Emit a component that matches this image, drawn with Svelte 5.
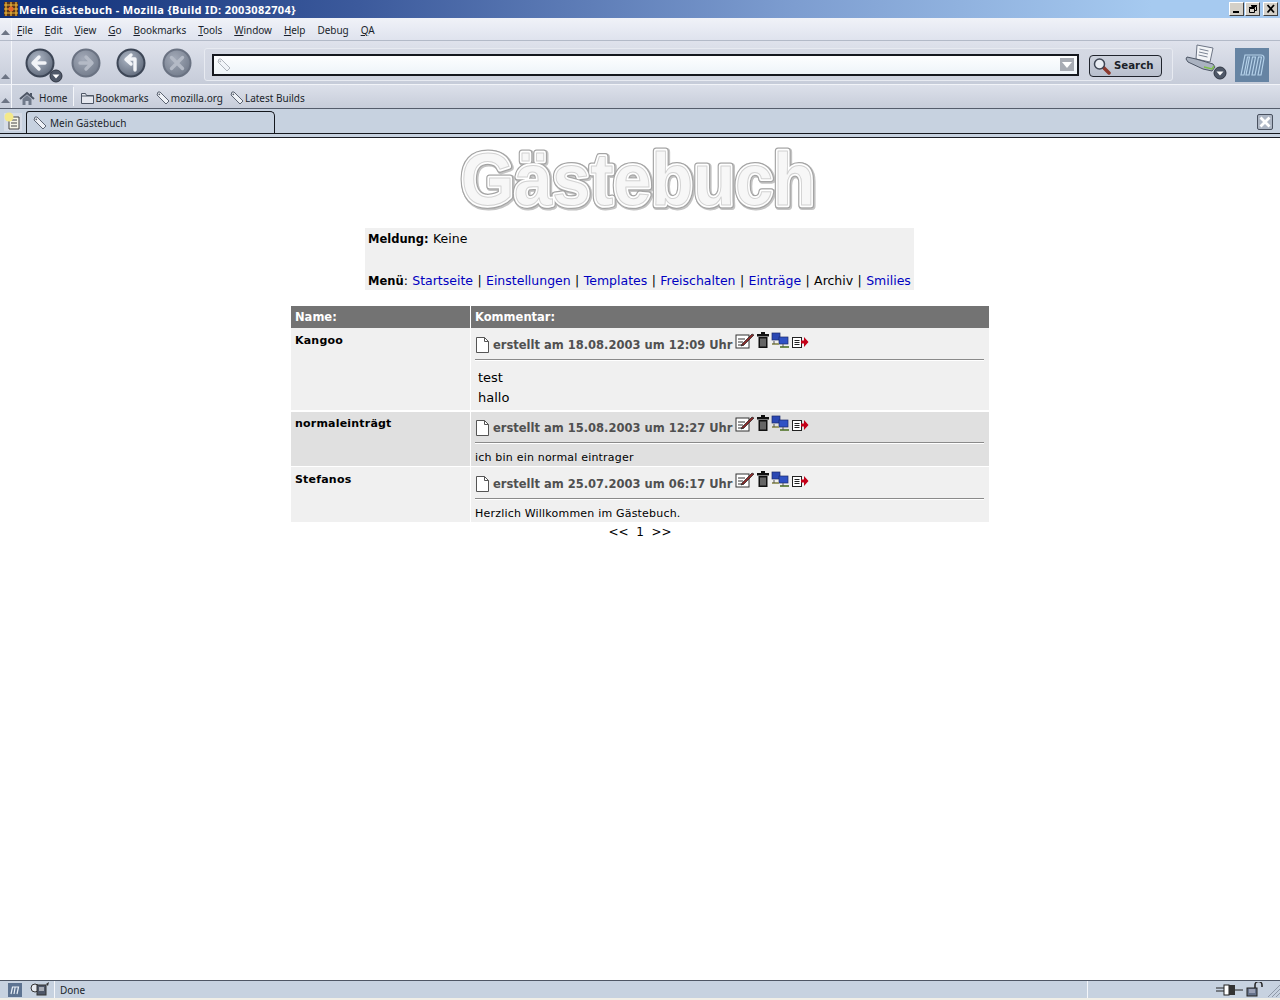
<script>
  const menus = [['F','ile'],['E','dit'],['V','iew'],['G','o'],['B','ookmarks'],['T','ools'],['W','indow'],['H','elp'],['','Debug'],['Q','A']];
  const links = ['Startseite','Einstellungen','Templates','Freischalten','Einträge'];
  const entries = [
    { name:'Kangoo', date:'18.08.2003 um 12:09', lines:['test','hallo'], big:true, alt:false },
    { name:'normaleinträgt', date:'15.08.2003 um 12:27', lines:['ich bin ein normal eintrager'], big:false, alt:true },
    { name:'Stefanos', date:'25.07.2003 um 06:17', lines:['Herzlich Willkommen im Gästebuch.'], big:false, alt:false }
  ];
</script>

{#snippet grip()}
  <span class="grip"><svg width="9" height="5" viewBox="0 0 9 5"><path d="M0 5 4.5 0 9 5z" fill="#6d7585"/></svg></span>
{/snippet}

{#snippet tag(cls)}
  <svg class={cls} width="16" height="16" viewBox="0 0 16 16"><path d="M3 2 2 5l9 9 3-3-9-9z" fill="#eef1f6" stroke="#5c6472" stroke-width="1"/><circle cx="4.3" cy="4.3" r=".9" fill="#5c6472"/></svg>
{/snippet}

{#snippet round(x, glyph, faded)}
  <svg class="round" width="32" height="32" viewBox="0 0 32 32" style="left:{x}px">
    <defs><radialGradient id="g{x}" cx=".4" cy=".35" r=".75"><stop offset="0" stop-color={faded ? '#a3aab8' : '#aeb7c6'}/><stop offset="1" stop-color={faded ? '#6f7888' : '#596374'}/></radialGradient></defs>
    <circle cx="16" cy="16" r="13.5" fill="url(#g{x})" stroke={faded ? '#6a7282' : '#3d4656'} stroke-width="2"/>
    <path d={glyph} fill="none" stroke={faded ? '#b4bac6' : '#f2f4f8'} stroke-width="3.4" stroke-linecap="round" stroke-linejoin="round"/>
  </svg>
{/snippet}

{#snippet dropdown(x, y)}
  <svg class="round" width="14" height="14" viewBox="0 0 14 14" style="left:{x}px;top:{y}px"><circle cx="7" cy="7" r="6" fill="#4f5868" stroke="#2f3643"/><path d="M3.5 5.5h7L7 9.5z" fill="#fff"/></svg>
{/snippet}

<div class="window">
  <header class="title">
    <svg width="16" height="16" viewBox="0 0 16 16" class="ticon"><rect x="1" y="1" width="14" height="14" fill="#5a3419"/><path d="M3 1v14M8 1v14M13 1v14M1 4h14M1 8h14M1 12h14" stroke="#f0b93a" stroke-width="1.2"/><circle cx="8" cy="8" r="2.500" fill="#e8692a"/></svg>
    <span class="ttext">Mein Gästebuch - Mozilla {'{'}Build ID: 2003082704{'}'}</span>
    <div class="winbtns">
      <button aria-label="min"><svg width="12" height="10"><rect x="2" y="7" width="6" height="2" fill="#000"/></svg></button>
      <button aria-label="max"><svg width="12" height="10"><path d="M4.5 2.5h5v4h-2M4 1.5h6M2.5 4.5h5v4h-5zM2 3.5h6" fill="none" stroke="#000"/></svg></button>
      <button class="close" aria-label="close"><svg width="12" height="10"><path d="M2.5 1 9 8.5M9 1 2.500 8.500" stroke="#000" stroke-width="1.800"/></svg></button>
    </div>
  </header>

  <div class="menubar">
    {@render grip()}
    <nav class="menus">
      {#each menus as m}<span><u>{m[0]}</u>{m[1]}</span>{/each}
    </nav>
  </div>

  <div class="navbar">
    {@render grip()}
    <div class="navbtns">
      {@render round(12, 'M21 16H10M15 10l-6 6 6 6', false)}
      {@render dropdown(37, 28)}
      {@render round(58, 'M10 16h11M16 10l6 6-6 6', true)}
      {@render round(103, 'M20 23V12H12M16 8l-5 4.500 5 4.500', false)}
      {@render round(149, 'M10.500 10.500l11 11M21.500 10.500l-11 11', true)}
    </div>
    <div class="urlbox">
      <div class="urlinput">
        {@render tag('urltag')}
        <span class="urlarrow"><svg width="10" height="6" viewBox="0 0 10 6"><path d="M0 0h10L5 6z" fill="#fff"/></svg></span>
      </div>
      <button class="search">
        <svg width="20" height="18" viewBox="0 0 20 18"><path d="M11 10l6 6" stroke="#8c3a2e" stroke-width="3.500" stroke-linecap="round"/><circle cx="7.500" cy="7" r="5" fill="#e9edf3" stroke="#3e4654" stroke-width="1.500"/></svg>
        Search
      </button>
    </div>
    <div class="printer">
      <svg width="42" height="38" viewBox="0 0 42 38">
        <path d="M12 1l16 3-3 14-14-3z" fill="#f3f5f8" stroke="#6d7585"/>
        <path d="M14.500 5l9 2M14 8l9 2M13.500 11l9 2" stroke="#7b8494"/>
        <path d="M2 13l9 2 17 5 2 3-3 4-9-2-15-7-2-3z" fill="#aab2c0" stroke="#4c5564"/>
        <path d="M19 23l8 2 2-3" stroke="#7cc049" stroke-width="1.500" fill="none"/>
      </svg>
      {@render dropdown(30, 25)}
    </div>
    <div class="mlogo">
      <svg width="34" height="34" viewBox="0 0 34 34"><rect width="34" height="34" fill="#6684a3"/><path d="M6 27 10 7h16q3 0 3 3l-3 17h-3l3.500-18h-3L20 27h-3l3.500-18h-3L14 27h-3l3.500-18h-2L9 27z" fill="none" stroke="#b5d2ea" stroke-width="1.200"/></svg>
    </div>
  </div>

  <div class="personal">
    {@render grip()}
    <div class="homeitem">
      <svg width="16" height="15" viewBox="0 0 16 15"><path d="M1 8 8 2l7 6" fill="none" stroke="#4d5665" stroke-width="2"/><path d="M3.500 8v6h3v-4h3v4h3V8L8 4z" fill="#707a8a"/><rect x="11" y="2" width="2" height="3" fill="#4d5665"/></svg>
      <span>Home</span>
    </div>
    <span class="sep"></span>
    <div class="bm folder">
      <svg width="15" height="14" viewBox="0 0 15 14"><path d="M1.500 12.500v-10h4l1 2h7v8z" fill="#e5e8ef" stroke="#4d5665"/><path d="M1.500 5h12" stroke="#4d5665"/></svg>
      <span>Bookmarks</span>
    </div>
    <div class="bm">{@render tag('')}<span>mozilla.org</span></div>
    <div class="bm">{@render tag('')}<span>Latest Builds</span></div>
  </div>

  <div class="tabbar">
    <svg class="newtab" width="20" height="20" viewBox="0 0 20 20"><rect x="1" y="1" width="18" height="18" fill="#d7dde8"/><path d="M6 5h10v12H6z" fill="#f7f7ea" stroke="#444"/><path d="M8 8h6M8 11h6M8 14h6" stroke="#444"/><circle cx="6" cy="5" r="4.500" fill="#f4e98a"/></svg>
    <div class="tab">
      {@render tag('')}
      <span>Mein Gästebuch</span>
    </div>
    <div class="tabrest">
      <button class="tabclose" aria-label="close tab"><svg width="12" height="12" viewBox="0 0 12 12"><path d="M1.500 1.500l9 9M10.500 1.500l-9 9" stroke="#fff" stroke-width="2.800"/></svg></button>
    </div>
  </div>

  <main class="page">
    <div class="logo" role="img" aria-label="Gästebuch">
      <svg width="480" height="92" viewBox="0 0 480 92">
        <text class="s1" x="62" y="72" textLength="354" lengthAdjust="spacingAndGlyphs">Gästebuch</text>
        <text class="s2" x="61" y="71" textLength="354" lengthAdjust="spacingAndGlyphs">Gästebuch</text>
        <text class="s3" x="61" y="71" textLength="354" lengthAdjust="spacingAndGlyphs">Gästebuch</text>
        <text class="s4" x="61" y="71" textLength="354" lengthAdjust="spacingAndGlyphs">Gästebuch</text>
      </svg>
    </div>

    <section class="notice">
      <p class="meld"><b>Meldung:</b> Keine</p>
      <p class="menu"><b>Menü</b>: {#each links as l}<a href="#top">{l}</a>{' | '}{/each}Archiv | <a href="#top">Smilies</a></p>
    </section>

    <section class="book">
      <div class="head hn">Name:</div>
      <div class="head">Kommentar:</div>
      {#each entries as e}
        <div class="cname" class:alt={e.alt}>{e.name}</div>
        <div class="ctext" class:alt={e.alt}>
          <div class="meta">
            <svg class="doc" width="13" height="16" viewBox="0 0 13 16"><path d="M.5.500h8l4 4v11H.500z" fill="#fff" stroke="#555"/><path d="M8.500.500v4h4" fill="none" stroke="#555"/></svg>
            <b>erstellt am {e.date} Uhr</b>
            <span class="tools">
              <svg width="20" height="17" viewBox="0 0 20 17"><rect x="1" y="3" width="13" height="13" fill="#fff" stroke="#333"/><path d="M3 7h7M3 10h5M3 13h6" stroke="#333"/><path d="M7 12 17 2l2 1L9 13l-3 1z" fill="#8a2a2a" stroke="#222" stroke-width=".7"/></svg>
              <svg width="14" height="17" viewBox="0 0 14 17"><rect x="5" y="0" width="4" height="2" fill="#111"/><rect x="1" y="2" width="12" height="2.500" fill="#111"/><path d="M2.500 5h9v11h-9z" fill="#111"/><path d="M5 6.500v8M7 6.500v8M9 6.500v8" stroke="#bbb"/></svg>
              <svg width="19" height="17" viewBox="0 0 19 17"><rect x="1" y="1" width="8" height="7" fill="#2a47b3" stroke="#1a2a6a" stroke-width=".7"/><rect x="8" y="5" width="9" height="7" fill="#2f52c4" stroke="#1a2a6a" stroke-width=".7"/><path d="M1 11h7v2H1z" fill="#9a9a6a"/><path d="M9 14h9v2H9z" fill="#6e8a4e"/><path d="M3 9v3M12 12v3" stroke="#555"/></svg>
              <svg width="18" height="17" viewBox="0 0 18 17"><rect x="1.500" y="5.500" width="9" height="10" fill="#fff" stroke="#222"/><path d="M3.500 8.500h5M3.500 10.500h5M3.500 12.500h5" stroke="#222"/><path d="M10 8.500h3V5l4.500 5-4.500 5v-3.500h-3z" fill="#c40018"/></svg>
            </span>
          </div>
          <hr />
          {#if e.big}
            <div class="big">{#each e.lines as l}<div>{l}</div>{/each}</div>
          {:else}
            <div class="small">{e.lines[0]}</div>
          {/if}
        </div>
      {/each}
    </section>

    <div class="pager">&lt;&lt;&nbsp; 1&nbsp; &gt;&gt;</div>
  </main>

  <footer class="status">
    <span class="scell icons">
      <svg width="14" height="14" viewBox="0 0 14 14"><rect width="14" height="14" fill="#5d7391"/><path d="M3 11 4.500 4h6l-1.500 7M6 11l1.200-7" fill="none" stroke="#e9f0f8" stroke-width="1.200"/></svg>
      <svg width="20" height="15" viewBox="0 0 20 15"><circle cx="5" cy="6" r="4" fill="#e7eaf0" stroke="#333"/><rect x="7" y="3" width="9" height="10" fill="#4e5768" stroke="#333"/><path d="M9 6h5M9 8h5" stroke="#fff"/><path d="M16 2l3-2-1 4z" fill="#333"/></svg>
    </span>
    <span class="scell done">Done</span>
    <span class="scell last">
      <svg width="27" height="12" viewBox="0 0 27 12"><path d="M0 4h8M0 7h8M19 6h8" stroke="#222"/><rect x="8" y="1" width="5" height="10" fill="#fff" stroke="#222"/><rect x="13" y="1" width="6" height="10" fill="#333"/></svg>
      <svg width="17" height="15" viewBox="0 0 17 15"><rect x="1" y="6" width="10" height="8" fill="#66728a" stroke="#222"/><path d="M3 8h6M3 10h6" stroke="#ccd"/><path d="M9 6V3a3 3 0 0 1 7 0v2" fill="none" stroke="#222" stroke-width="1.500"/></svg>
      <svg class="corner" width="14" height="14" viewBox="0 0 14 14"><path d="M2 14 14 2M6 14 14 6M10 14l4-4" stroke="#8f99a8"/></svg>
    </span>
  </footer>
</div>

<style>
  :global(body) { margin: 0; background: #fff; }
  .window { width: 1280px; height: 1000px; display: flex; flex-direction: column; overflow: hidden; font-family: "Noto Sans", "Liberation Sans", sans-serif; font-size: 10px; color: #1a1f2b; }
  .title { height: 18px; flex: none; display: flex; align-items: center; background: linear-gradient(90deg, #0f2f78 0%, #3c5a9c 28%, #7d9dd0 62%, #a6caf0 90%); color: #fff; }
  .ticon { margin: 0 0 0 3px; flex: none; }
  .ttext { font: bold 11px "Noto Sans", sans-serif; letter-spacing: .35px; }
  .winbtns { margin-left: auto; display: flex; gap: 1px; padding-right: 2px; }
  .winbtns button { width: 15px; height: 14px; padding: 0; border: 1px solid; border-color: #fff #404040 #404040 #fff; background: #d4d0c8; display: flex; align-items: center; justify-content: center; }
  .winbtns .close { margin-left: 2px; }
  .grip { width: 12px; flex: none; align-self: stretch; display: flex; align-items: flex-end; justify-content: center; padding-bottom: 5px; box-sizing: border-box; border-right: 1px solid #f4f6fa; }
  .menubar { height: 23px; flex: none; display: flex; align-items: stretch; background: linear-gradient(#f0f2f8, #dfe3ee); border-bottom: 1px solid #b3bac8; box-sizing: border-box; }
  .menus { display: flex; align-items: center; padding: 1px 0 0 5px; font-size: 10px; letter-spacing: -.05px; }
  .menus span { margin-right: 12px; }
  .menus u { text-underline-offset: 1px; }
  .navbar { height: 44px; flex: none; display: flex; align-items: stretch; background: linear-gradient(#dfe2ec, #c6ccd9); border-bottom: 1px solid #f1f3f8; box-sizing: border-box; }
  .navbtns { width: 192px; flex: none; position: relative; }
  .round { position: absolute; top: 6px; }
  .urlbox { width: 969px; flex: none; margin: 7px 0 3px 0; display: flex; align-items: center; background: linear-gradient(#d5d9e4, #cfd4e0); border: 1px solid #e7eaf1; border-radius: 3px; box-sizing: border-box; padding-left: 7px; }
  .urlinput { width: 867px; height: 22px; box-sizing: border-box; border: 2px solid #15181f; background: linear-gradient(#fdfeff, #eef4f9); display: flex; align-items: center; justify-content: space-between; padding: 0 3px 0 2px; }
  .urltag { opacity: .45; }
  .urlarrow { width: 14px; height: 13px; background: #a8acb4; display: flex; align-items: center; justify-content: center; }
  .search { margin: 2px 0 0 10px; width: 73px; height: 22px; box-sizing: border-box; padding: 0 0 0 2px; border: 1px solid #20242d; border-radius: 4px; background: linear-gradient(#cdd2dd, #b9c0ce); font: bold 10.2px "DejaVu Sans", sans-serif; color: #1b1f29; display: flex; align-items: center; gap: 2px; }
  .printer { width: 52px; flex: none; position: relative; margin-left: 10px; }
  .printer svg:first-child { margin: 3px 0 0 2px; }
  .mlogo { flex: none; margin: 7px 0 0 0; height: 34px; }
  .personal { height: 25px; margin-bottom: -1px; flex: none; display: flex; align-items: stretch; background: linear-gradient(#dce0ea, #c7cdda); border-bottom: 2px solid #555d6c; box-sizing: border-box; padding-top: 3px; }
  .personal .grip { margin-top: -3px; }
  .homeitem { display: flex; align-items: center; gap: 4px; padding: 0 6px 0 7px; margin-top: -3px; padding-top: 3px; background: linear-gradient(#cdd3df, #c7cdda); }
  .sep { width: 1px; margin: -1px 0 2px; background: #f4f6fa; }
  .bm { display: flex; align-items: center; gap: 0; margin-left: 6px; }
  .folder { margin-left: 6px; }
  .tabbar { height: 29px; flex: none; display: flex; align-items: flex-start; background: #c7d2e0; border-bottom: 1px solid #1a1d24; box-sizing: border-box; position: relative; }
  .tabbar::after { content: ""; position: absolute; left: 0; right: 0; bottom: 3px; height: 1px; background: #14171d; }
  .newtab { margin: 3px 3px 0 3px; flex: none; }
  .tab { position: relative; z-index: 1; width: 249px; height: 22px; margin-top: 2px; box-sizing: border-box; border: 1px solid #14171d; border-bottom: 0; border-radius: 3px 5px 0 0; background: #c7d2e0; display: flex; align-items: center; gap: 2px; padding-left: 5px; }
  .tabrest { flex: 1; display: flex; justify-content: flex-end; padding: 5px 7px 0 0; }
  .tabclose { width: 16px; height: 16px; padding: 0; border: 1px solid #4a5260; border-radius: 2px; background: #aeb7c5; display: flex; align-items: center; justify-content: center; }
  .page { flex: 1; display: flex; flex-direction: column; align-items: center; font-family: "DejaVu Sans", sans-serif; color: #000; min-height: 0; }
  .logo { height: 90px; flex: none; display: flex; align-items: flex-start; }
  .logo svg { margin-top: -4px; }
  .logo text { font: bold 74px "Liberation Sans", sans-serif; stroke-linejoin: round; }
  .logo .s1 { fill: #c4c4c4; stroke: #c4c4c4; stroke-width: 8px; }
  .logo .s2 { fill: #a4a4a4; stroke: #a4a4a4; stroke-width: 7px; }
  .logo .s3 { fill: #fff; stroke: #fff; stroke-width: 4.500px; }
  .logo .s4 { fill: #f7f7f7; stroke: #d2d2d2; stroke-width: 1px; }
  .notice { width: 549px; margin-right: 1px; height: 62px; background: #f0f0f0; box-sizing: border-box; padding: 3px 3px 1px; display: flex; flex-direction: column; justify-content: space-between; font-size: 12.500px; line-height: 15px; white-space: nowrap; word-spacing: .4px; }
  .notice p { margin: 0; }
  .notice b { font-size: 11.500px; }
  .notice a { color: #0000c0; text-decoration: none; }
  .book { width: 698px; margin-top: 16px; display: grid; grid-template-columns: 179px 518px; column-gap: 1px; row-gap: 1px; }
  .head { height: 22px; background: #737373; color: #fff; font-weight: bold; font-size: 11.500px; line-height: 22px; padding-left: 4px; margin-bottom: -1px; }
  .cname { background: #f0f0f0; font-weight: bold; font-size: 11px; padding: 6px 0 0 4px; letter-spacing: .2px; }
  .cname.alt { padding-top: 5px; margin-top: 1px; }
  .ctext { background: #f0f0f0; padding: 0 5px 0 4px; min-width: 0; }
  .ctext.alt { margin-top: 1px; }
  .ctext.alt .meta { height: 30px; }
  .ctext.alt .tools { margin-top: 3px; }
  .alt { background: #e0e0e0; }
  .meta { height: 31px; display: flex; align-items: flex-end; color: #505050; font-size: 11.500px; white-space: nowrap; }
  .doc { flex: none; margin: 0 4px 6px 1px; }
  .meta b { margin-bottom: 7px; line-height: 14px; }
  .tools { display: flex; align-items: flex-start; align-self: flex-start; margin: 4px 0 0 3px; gap: 1px; }
  hr { margin: 0; height: 0; border: 0; border-top: 1px solid #8a8a8a; box-shadow: 0 1px 0 #fff; }
  .big { padding: 8px 0 2px 3px; font-size: 13px; line-height: 20px; }
  .small { padding-top: 8px; font-size: 11px; line-height: 14px; height: 15px; letter-spacing: .2px; }
  .pager { font-size: 12px; line-height: 18px; white-space: nowrap; margin-top: 1px; }
  .status { height: 20px; flex: none; display: flex; background: #c7d2e0; border-top: 1px solid #4e5664; border-bottom: 2px solid #f1efe7; box-sizing: border-box; font-size: 10px; }
  .scell { display: flex; align-items: center; }
  .icons { width: 55px; gap: 8px; padding-left: 8px; box-sizing: border-box; border-right: 1px solid #f4f6fa; }
  .done { width: 1033px; padding-left: 5px; box-sizing: border-box; border-right: 1px solid #f4f6fa; }
  .last { flex: 1; justify-content: flex-end; gap: 3px; }
  .corner { margin-left: 0; }
</style>
